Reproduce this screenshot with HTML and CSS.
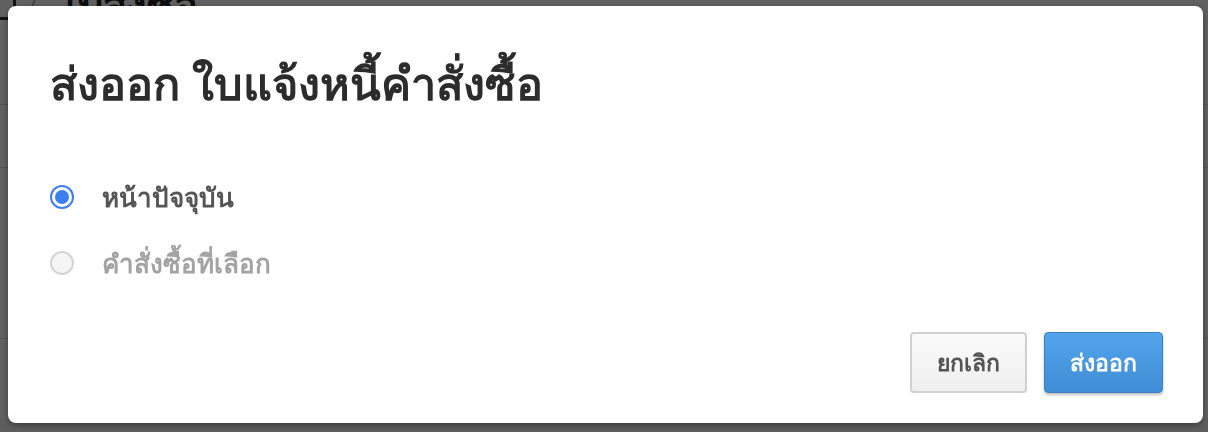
FILE: index.html
```html
<!DOCTYPE html>
<html lang="th">
  <head>
    <meta charset="UTF-8">
    <meta name="viewport" content="width=device-width, initial-scale=1.0">
    <title>ส่งออก ใบแจ้งหนี้คำสั่งซื้อ</title>
    <link rel="stylesheet" href="styles.css">
  </head>
  <body>

    <div class="page">
      <div class="crumbs">
        <span class="crumb-icon"></span>
        <span class="crumb-sep">/</span>
        <span class="crumb-title">ใบสั่งซื้อ</span>
      </div>
      <div class="page-line one"></div>
      <div class="page-line two"></div>
      <div class="page-line three"></div>
    </div>

    <div class="overlay">
      <div class="modal">
        <h1 class="modal-title">ส่งออก ใบแจ้งหนี้คำสั่งซื้อ</h1>

        <div class="options">
          <label class="option">
            <input type="radio" name="scope" value="current" checked>
            <span>หน้าปัจจุบัน</span>
          </label>
          <label class="option disabled">
            <input type="radio" name="scope" value="selected" disabled>
            <span>คำสั่งซื้อที่เลือก</span>
          </label>
        </div>

        <div class="actions">
          <button type="button" class="btn btn-cancel">ยกเลิก</button>
          <button type="button" class="btn btn-export">ส่งออก</button>
        </div>
      </div>
    </div>

  </body>
</html>
```

FILE: styles.css
```css
html, body {
  margin: 0;
  height: 100%;
}

body {
  font-family: "Noto Sans", "DejaVu Sans", sans-serif;
  background: #f4f4f4;
  overflow: hidden;
}

/* page behind the dialog */
.page {
  height: 100%;
  background: #fff;
}
.crumbs {
  display: flex;
  align-items: center;
  gap: 12px;
  height: 40px;
  margin-top: -14px;
}
.crumb-icon {
  width: 22px;
  height: 22px;
  border: 3px solid #333;
  border-radius: 3px;
  margin-left: -12px;
}
.crumb-sep {
  color: #aaa;
  font-size: 22px;
}
.crumb-title {
  font-size: 40px;
  font-weight: bold;
  color: #222;
  margin-left: 10px;
}
.page-line {
  height: 1px;
  background: #ddd;
}
.page-line.one { margin-top: 78px; }
.page-line.two { margin-top: 62px; }
.page-line.three { margin-top: 170px; }

/* dialog */
.overlay {
  position: fixed;
  inset: 0;
  background: rgba(0, 0, 0, 0.62);
  padding: 6px 5px 9px 8px;
  box-sizing: border-box;
}
.modal {
  height: 100%;
  box-sizing: border-box;
  background: #fff;
  border-radius: 8px;
  box-shadow: 0 2px 6px rgba(0, 0, 0, .4);
  padding: 46px 40px 30px 42px;
  display: flex;
  flex-direction: column;
}

.modal-title {
  margin: 0;
  font-size: 45px;
  font-weight: 600;
  color: #2c2c2c;
  line-height: 62px;
}

.options {
  margin-top: 67px;
  display: flex;
  flex-direction: column;
  gap: 34px;
}
.option {
  display: flex;
  align-items: center;
  gap: 28px;
  font-size: 26px;
  font-weight: 600;
  color: #555;
  line-height: 32px;
}
.option.disabled {
  color: #a3a3a3;
}
.option input {
  appearance: none;
  margin: 0;
  width: 24px;
  height: 24px;
  border-radius: 50%;
  border: 2px solid #3b7ff0;
  background: #fff;
  position: relative;
  box-sizing: border-box;
}
.option input:checked::after {
  content: "";
  position: absolute;
  inset: 3px;
  border-radius: 50%;
  background: #3b7ff0;
}
.option input:disabled {
  border-color: #d4d4d4;
  background: #f5f5f5;
}

.actions {
  margin-top: auto;
  display: flex;
  justify-content: flex-end;
  gap: 17px;
}
.btn {
  height: 61px;
  border-radius: 4px;
  font-family: inherit;
  font-size: 23px;
  font-weight: 600;
  cursor: pointer;
}
.btn-cancel {
  width: 117px;
  color: #555;
  background: linear-gradient(#fafafa, #efefef);
  border: 2px solid #d0d0d0;
}
.btn-export {
  width: 119px;
  color: #fff;
  background: linear-gradient(#52a4ea, #3f8dd5);
  border: 1px solid #3a7fc4;
  box-shadow: 0 2px 3px rgba(0, 0, 0, .25);
}
```
